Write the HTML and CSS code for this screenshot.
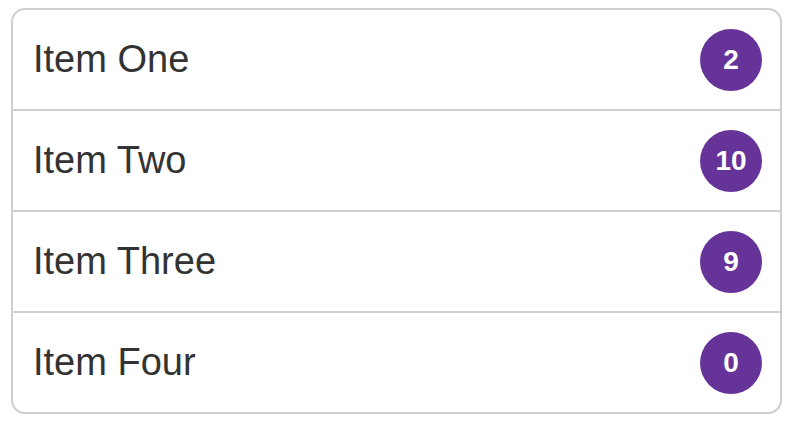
FILE: index.html
```html
<!DOCTYPE html>
<html lang="en">
<head>
  <meta charset="UTF-8" />
  <meta name="viewport" content="width=device-width, initial-scale=1.0" />
  <title>List Group</title>
  <link rel="stylesheet" href="styles.css">
</head>
<body>
  <ul class="list-group">
    <li class="list-item"><span class="label">Item One</span><span class="badge">2</span></li>
    <li class="list-item"><span class="label">Item Two</span><span class="badge">10</span></li>
    <li class="list-item"><span class="label">Item Three</span><span class="badge">9</span></li>
    <li class="list-item"><span class="label">Item Four</span><span class="badge">0</span></li>
  </ul>
</body>
</html>
```

FILE: styles.css
```css
body {
  margin: 0;
  padding: 8px 9px 0 11px;
  background: #fff;
  font-family: "Liberation Sans", Arial, sans-serif;
}
.list-group {
  list-style: none;
  margin: 0;
  padding: 0;
  border: 2px solid #cfcfcf;
  border-radius: 14px;
}
.list-item {
  display: flex;
  align-items: center;
  justify-content: space-between;
  height: 99px;
  padding: 0 18px 0 20px;
  border-top: 2px solid #cfcfcf;
}
.list-item:first-child {
  border-top: none;
}
.label {
  font-size: 38px;
  color: #333;
}
.badge {
  display: flex;
  align-items: center;
  justify-content: center;
  width: 62px;
  height: 62px;
  border-radius: 50%;
  background: #663399;
  color: #fff;
  font-weight: bold;
  font-size: 28px;
}
```
